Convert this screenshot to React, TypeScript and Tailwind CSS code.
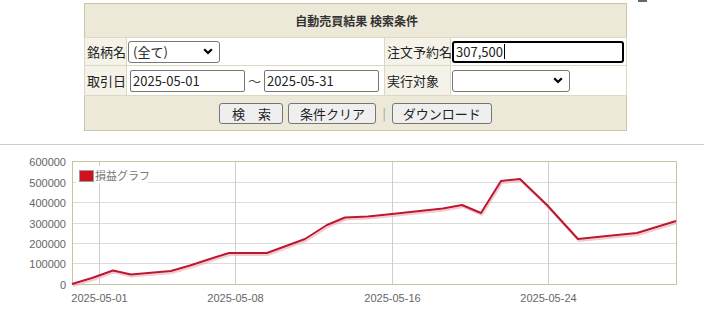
import React from "react";

const pts: [number, number][] = [
  [72, 284], [92, 278], [113, 270.5], [131, 274.5], [171, 271], [190, 265.5],
  [213, 258], [229, 253], [267, 253], [305, 239], [327, 225], [345, 217.5],
  [368, 216.5], [392, 214], [443, 208.5], [462, 205], [481, 213], [501, 181],
  [520, 179], [547, 205], [578, 239], [607, 236], [637, 233], [676, 221],
];

const yTicks = [
  { v: "600000", y: 161 },
  { v: "500000", y: 182 },
  { v: "400000", y: 202 },
  { v: "300000", y: 223 },
  { v: "200000", y: 243 },
  { v: "100000", y: 263 },
  { v: "0", y: 284 },
];
const xTicks = [
  { t: "2025-05-01", x: 99.5 },
  { t: "2025-05-08", x: 235.5 },
  { t: "2025-05-16", x: 392.5 },
  { t: "2025-05-24", x: 548.5 },
];

const Chevron = () => (
  <svg width="10" height="7" viewBox="0 0 10 7">
    <path d="M1.2 1.2 L5 5 L8.8 1.2" fill="none" stroke="#000" strokeWidth="2.2" />
  </svg>
);

const jp = { fontFamily: '"Noto Sans CJK JP", "Noto Sans", sans-serif' };

export default function App() {
  const line = pts.map((p) => p.join(",")).join(" ");
  const shadow = pts.map((p) => `${p[0] + 1},${p[1] + 2}`).join(" ");
  return (
    <div className="relative w-[704px] h-[317px] bg-white overflow-hidden" style={jp}>
      <div className="absolute left-[638px] top-0 w-[9px] h-[2px] bg-[#666]" />
      <div className="pt-[3px] pl-[84px]">
        <table className="table-fixed border-collapse border border-[#c9c5a6] text-[13px] text-[#222] w-[542px]">
          <colgroup>
            <col className="w-[42px]" />
            <col className="w-[258px]" />
            <col className="w-[66px]" />
            <col className="w-[176px]" />
          </colgroup>
          <tbody>
            <tr className="h-[34px] bg-[#ece9d8]">
              <td colSpan={4} className="text-center font-bold text-[12px] text-[#333] pt-[1px] pl-[2px]">
                自動売買結果 検索条件
              </td>
            </tr>
            <tr className="h-[28px]">
              <td className="bg-[#f5f3e9] border border-[#dcd8c2] pl-[2px] pr-0 leading-none whitespace-nowrap overflow-visible">銘柄名</td>
              <td className="bg-white border border-[#dcd8c2] pl-[1px]">
                <div className="flex items-center justify-between w-[92px] h-[22px] border border-[#767676] rounded-[3px] pl-[4px] pr-[6px] leading-none">
                  <span>(全て)</span>
                  <Chevron />
                </div>
              </td>
              <td className="bg-[#f5f3e9] border border-[#dcd8c2] pl-[2px] pr-0 leading-none whitespace-nowrap">注文予約名</td>
              <td className="bg-white border border-[#dcd8c2] pl-[1px]">
                <div className="flex items-center w-[172px] h-[22px] border-2 border-black rounded-[3px] pl-[2px] leading-none">
                  <span>307,500</span>
                  <span className="w-px h-[15px] bg-black ml-[1px]" />
                </div>
              </td>
            </tr>
            <tr className="h-[30px]">
              <td className="bg-[#f5f3e9] border border-[#dcd8c2] pl-[2px] pr-0 leading-none whitespace-nowrap">取引日</td>
              <td className="bg-white border border-[#dcd8c2] pl-[3px]">
                <div className="flex items-center gap-[3px] leading-none">
                  <div className="flex items-center w-[115px] h-[22px] border border-[#767676] rounded-[2px] pl-[2px]">2025-05-01</div>
                  <span className="text-[#444]">～</span>
                  <div className="flex items-center w-[115px] h-[22px] border border-[#767676] rounded-[2px] pl-[2px]">2025-05-31</div>
                </div>
              </td>
              <td className="bg-[#f5f3e9] border border-[#dcd8c2] pl-[2px] pr-0 leading-none whitespace-nowrap">実行対象</td>
              <td className="bg-white border border-[#dcd8c2] pl-[1px]">
                <div className="flex items-center justify-end w-[118px] h-[22px] border border-[#767676] rounded-[3px] pr-[6px]">
                  <Chevron />
                </div>
              </td>
            </tr>
            <tr className="h-[35px] bg-[#ece9d8]">
              <td colSpan={4} className="border-t border-[#dcd8c2]">
                <div className="flex items-center justify-center gap-[5px] leading-none text-[13px]">
                  <div className="flex items-center justify-center w-[64px] h-[21px] bg-[#efefef] border border-[#767676] rounded-[3px]">検　索</div>
                  <div className="flex items-center justify-center w-[88px] h-[21px] bg-[#efefef] border border-[#767676] rounded-[3px]">条件クリア</div>
                  <span className="text-[#999] text-[12px] px-[1px]">|</span>
                  <div className="flex items-center justify-center w-[100px] h-[21px] bg-[#efefef] border border-[#767676] rounded-[3px]">ダウンロード</div>
                </div>
              </td>
            </tr>
          </tbody>
        </table>
      </div>
      <div className="mt-[13px] h-px bg-[#cccccc] w-full" />
      <svg width="704" height="172" viewBox="0 145 704 172" className="block">
        {yTicks.slice(1, 6).map((t) => (
          <line key={t.v} x1="73" x2="676" y1={t.y + 0.5} y2={t.y + 0.5} stroke="#dcdcdc" strokeWidth="1" />
        ))}
        {xTicks.map((t) => (
          <line key={t.t} x1={t.x} x2={t.x} y1="161" y2="284" stroke="#cfcfcf" strokeWidth="1" />
        ))}
        <rect x="72.5" y="161.5" width="604" height="123" fill="none" stroke="#c8c4a2" strokeWidth="1" />
        {yTicks.map((t) => (
          <text key={t.v} x="66" y={t.y + 4.5} textAnchor="end" fontSize="11" fill="#666" fontFamily='"Liberation Sans", Arial, sans-serif'>
            {t.v}
          </text>
        ))}
        {xTicks.map((t) => (
          <text key={t.t} x={t.x} y="302" textAnchor="middle" fontSize="11" fill="#666" fontFamily='"Liberation Sans", Arial, sans-serif'>
            {t.t}
          </text>
        ))}
        <rect x="76" y="166" width="72" height="17" fill="#ffffff" fillOpacity="0.85" />
        <rect x="79.5" y="170.5" width="14" height="11" fill="#d0121e" stroke="#999" strokeWidth="1" />
        <text x="95" y="180" fontSize="11" fill="#777" fontFamily='"Noto Sans CJK JP", sans-serif'>損益グラフ</text>
        <polyline points={shadow} fill="none" stroke="#e9a9b0" strokeOpacity="0.6" strokeWidth="2" strokeLinejoin="round" />
        <polyline points={line} fill="none" stroke="#bd1630" strokeWidth="2" strokeLinejoin="round" />
      </svg>
    </div>
  );
}
